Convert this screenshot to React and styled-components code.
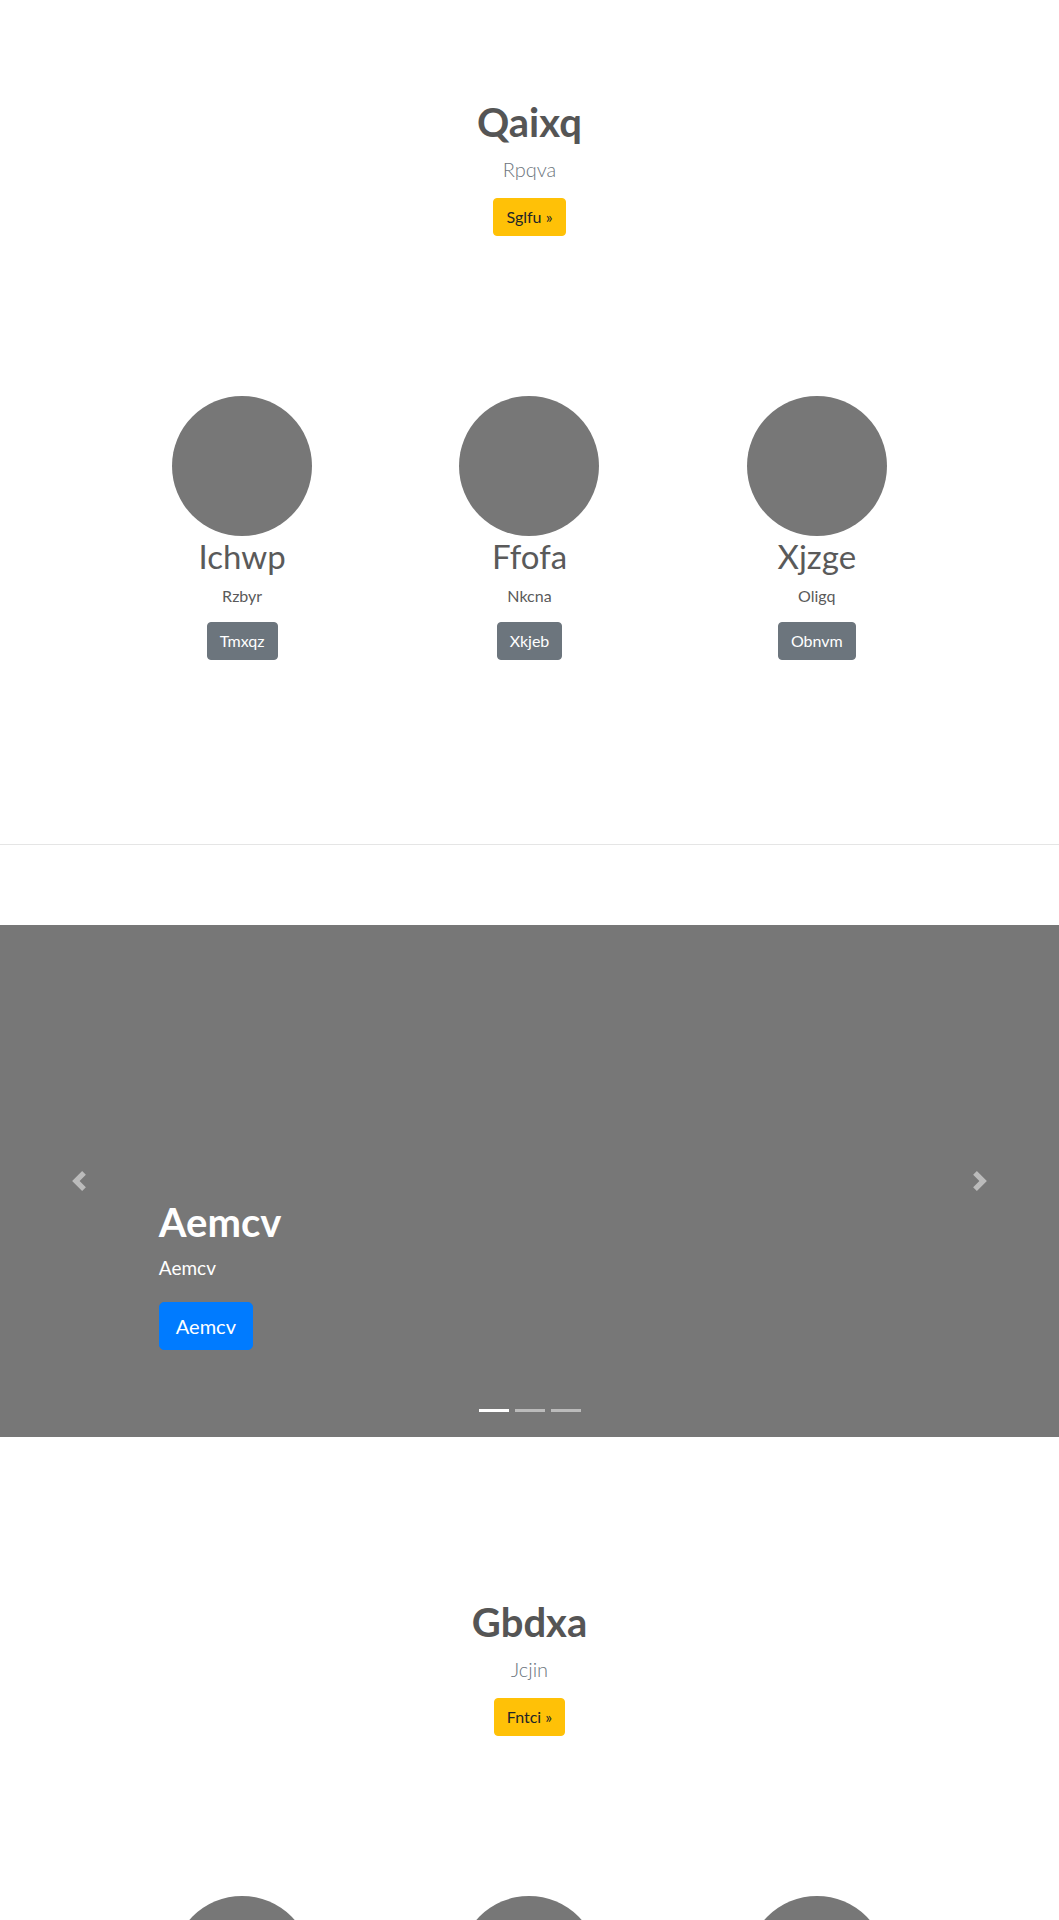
import React from 'react';
import styled, { createGlobalStyle } from 'styled-components';

const GlobalStyle = createGlobalStyle`
  html, body {
    margin: 0;
    padding: 0;
    background: #fff;
  }
  body {
    font-family: Lato, "Open Sans", "Liberation Sans", sans-serif;
    color: #5a5a5a;
    font-size: 16px;
    line-height: 1.5;
  }
  * {
    box-sizing: border-box;
  }
`;

// Top intro block with title, lead text and call to action
const Hero = styled.section`
  text-align: center;
  padding: 98px 16px 0;
`;

const HeroTitle = styled.h1`
  margin: 0 0 8px;
  font-size: 40px;
  line-height: 1.2;
  font-weight: 700;
  color: #555;
`;

const HeroLead = styled.p`
  margin: 0 0 14px;
  font-size: 20px;
  line-height: 1.5;
  font-weight: 300;
  color: #6c757d;
`;

const Button = styled.a`
  display: inline-block;
  border: 1px solid ${p => p.$bg};
  background: ${p => p.$bg};
  color: ${p => p.$fg};
  border-radius: ${p => (p.$large ? '5px' : '4px')};
  font-size: ${p => (p.$large ? '20px' : '16px')};
  line-height: ${p => (p.$large ? '30px' : '24px')};
  padding: ${p => (p.$large ? '8px 16px' : '6px 12px')};
  text-decoration: none;
  cursor: pointer;
`;

// Three column marketing row
const Cards = styled.section`
  display: grid;
  grid-template-columns: repeat(3, 1fr);
  max-width: 862px;
  margin: 0 auto;
  padding: 160px 0 ${p => p.$bottom || 184}px;
`;

const Card = styled.div`
  display: flex;
  flex-direction: column;
  align-items: center;
  text-align: center;
`;

const Avatar = styled.div`
  width: 140px;
  height: 140px;
  border-radius: 50%;
  background: #777;
`;

const CardName = styled.h2`
  margin: 0 0 8px;
  font-size: 33px;
  line-height: 40px;
  font-weight: 400;
  color: #5a5a5a;
`;

const CardText = styled.p`
  margin: 0 0 14px;
  font-size: 16px;
  line-height: 1.5;
  color: #5a5a5a;
`;

const Divider = styled.hr`
  margin: 0;
  border: 0;
  border-top: 1px solid #e5e5e5;
`;

// Slide area
const Carousel = styled.section`
  position: relative;
  height: 512px;
  margin: 80px 0 63px;
  background: #777;
  display: flex;
  flex-direction: column;
  justify-content: flex-end;
  padding: 0 15% 87px;
  color: #fff;
`;

const CaptionTitle = styled.h1`
  margin: 0 0 8px;
  font-size: 40px;
  line-height: 1.2;
  font-weight: 700;
`;

const CaptionText = styled.p`
  margin: 0 0 20px;
  font-size: 19px;
  line-height: 1.5;
`;

const CaptionAction = styled.div`
  display: flex;
`;

const Control = styled.button`
  position: absolute;
  top: 0;
  bottom: 0;
  ${p => (p.$side === 'left' ? 'left: 0;' : 'right: 0;')}
  width: 15%;
  display: flex;
  align-items: center;
  justify-content: center;
  border: 0;
  background: none;
  opacity: 0.5;
  padding: 0;
  cursor: pointer;
`;

const Indicators = styled.ol`
  position: absolute;
  left: 0;
  right: 0;
  bottom: 25px;
  display: flex;
  justify-content: center;
  gap: 6px;
  margin: 0;
  padding: 0;
  list-style: none;
`;

const Indicator = styled.li`
  width: 30px;
  height: 3px;
  background: ${p => (p.$active ? '#fff' : 'rgba(255, 255, 255, 0.5)')};
`;

const Chevron = ({ dir }) => (
  <svg width="20" height="20" viewBox="0 0 8 8" fill="#fff">
    {dir === 'left' ? (
      <path d="M5.25 0l-4 4 4 4 1.5-1.5L4.25 4l2.5-2.5L5.25 0z" />
    ) : (
      <path d="M2.75 0l-1.5 1.5L3.75 4l-2.5 2.5L2.75 8l4-4-4-4z" />
    )}
  </svg>
);

const firstCards = [
  { name: 'Ichwp', text: 'Rzbyr', action: 'Tmxqz' },
  { name: 'Ffofa', text: 'Nkcna', action: 'Xkjeb' },
  { name: 'Xjzge', text: 'Oligq', action: 'Obnvm' },
];

function HeroBlock({ title, lead, action }) {
  return (
    <Hero>
      <HeroTitle>{title}</HeroTitle>
      <HeroLead>{lead}</HeroLead>
      <Button $bg="#ffc107" $fg="#212529">{action} »</Button>
    </Hero>
  );
}

function App() {
  return (
    <>
      <GlobalStyle />
      <HeroBlock title="Qaixq" lead="Rpqva" action="Sglfu" />

      <Cards>
        {firstCards.map(card => (
          <Card key={card.name}>
            <Avatar />
            <CardName>{card.name}</CardName>
            <CardText>{card.text}</CardText>
            <Button $bg="#6c757d" $fg="#fff">{card.action}</Button>
          </Card>
        ))}
      </Cards>

      <Divider />

      <Carousel>
        <CaptionTitle>Aemcv</CaptionTitle>
        <CaptionText>Aemcv</CaptionText>
        <CaptionAction>
          <Button $large $bg="#007bff" $fg="#fff">Aemcv</Button>
        </CaptionAction>
        <Control $side="left" aria-label="Previous">
          <Chevron dir="left" />
        </Control>
        <Control $side="right" aria-label="Next">
          <Chevron dir="right" />
        </Control>
        <Indicators>
          <Indicator $active />
          <Indicator />
          <Indicator />
        </Indicators>
      </Carousel>

      <HeroBlock title="Gbdxa" lead="Jcjin" action="Fntci" />

      <Cards $bottom={80}>
        {[0, 1, 2].map(i => (
          <Card key={i}>
            <Avatar />
          </Card>
        ))}
      </Cards>
    </>
  );
}

export default App;
